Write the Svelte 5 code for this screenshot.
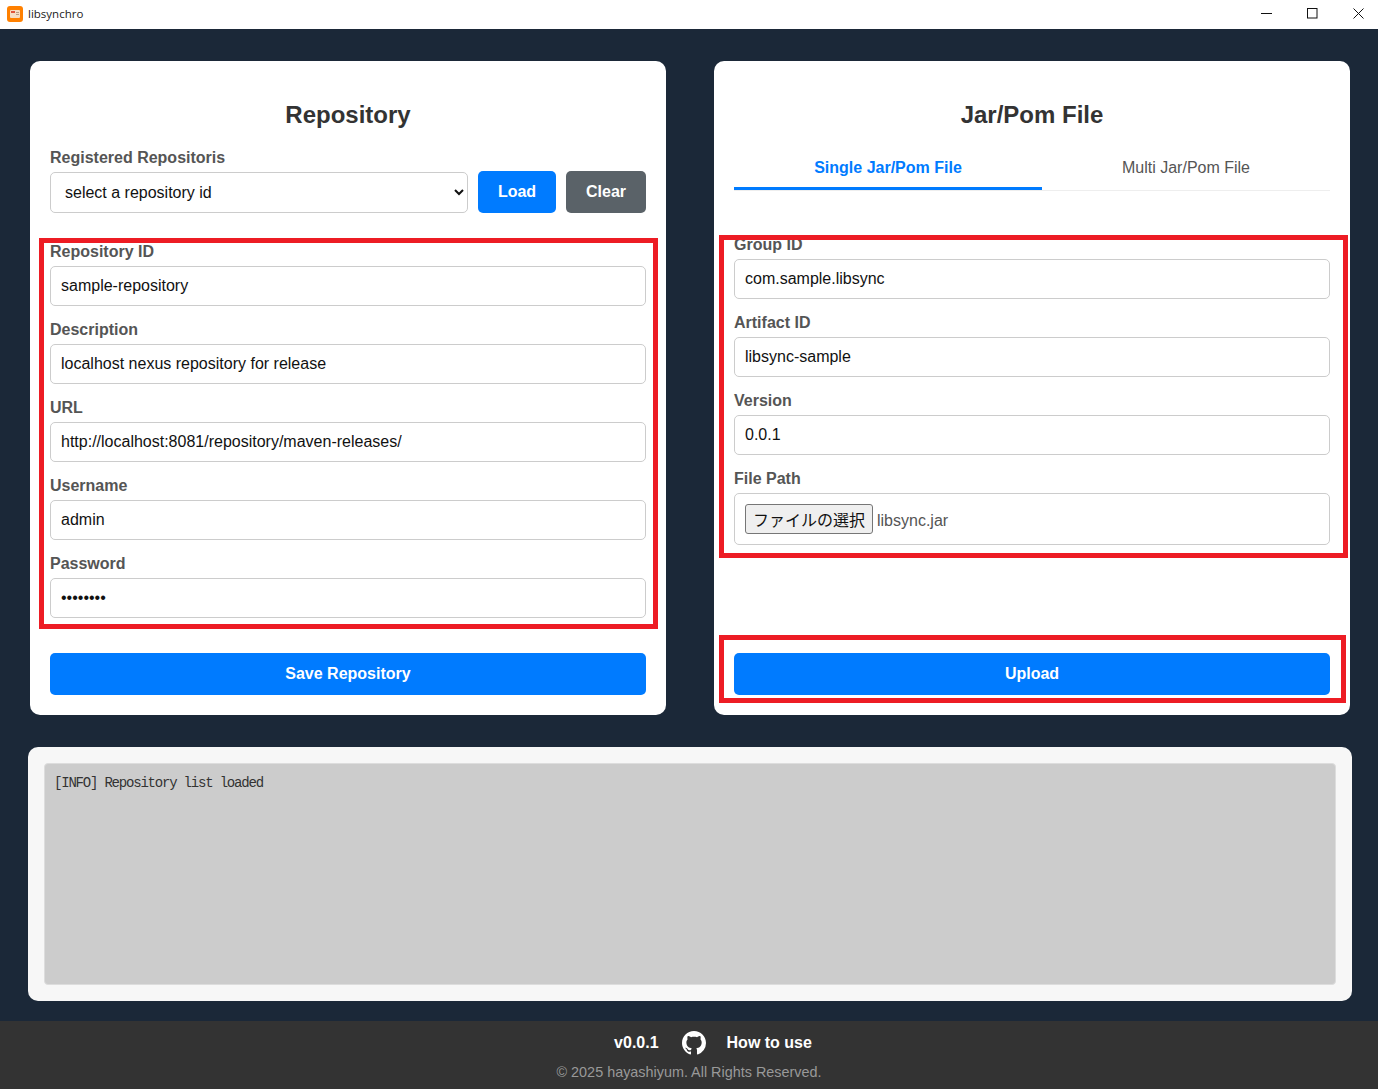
<script lang="ts">
  const repoFields = [
    { label: 'Repository ID', value: 'sample-repository', type: 'text' },
    { label: 'Description', value: 'localhost nexus repository for release', type: 'text' },
    { label: 'URL', value: 'http://localhost:8081/repository/maven-releases/', type: 'text' },
    { label: 'Username', value: 'admin', type: 'text' },
    { label: 'Password', value: 'password', type: 'password' },
  ];

  const jarFields = [
    { label: 'Group ID', value: 'com.sample.libsync' },
    { label: 'Artifact ID', value: 'libsync-sample' },
    { label: 'Version', value: '0.0.1' },
  ];
</script>

<div class="app">
  <header class="titlebar">
    <svg class="app-icon" viewBox="0 0 16 16" width="16" height="16" aria-hidden="true">
      <rect x="0" y="0" width="16" height="16" rx="3" fill="#ff8000" />
      <rect x="3" y="4" width="10" height="8" rx="1" fill="#f6dcc4" />
      <rect x="4" y="5" width="4" height="2" fill="#e0523a" />
      <rect x="9" y="6" width="3" height="1" fill="#b89a84" />
      <rect x="9" y="8" width="3" height="1" fill="#b89a84" />
    </svg>
    <span class="app-name">libsynchro</span>
    <div class="window-controls">
      <svg viewBox="0 0 11 11" width="11" height="11" aria-hidden="true"><path d="M0 5.5h11" stroke="#111" fill="none" /></svg>
      <svg viewBox="0 0 11 11" width="11" height="11" aria-hidden="true"><rect x="0.5" y="0.5" width="9.5" height="9.5" stroke="#111" fill="none" /></svg>
      <svg viewBox="0 0 11 11" width="11" height="11" aria-hidden="true"><path d="M0.5 0.5l10 10M10.5 0.5l-10 10" stroke="#111" fill="none" /></svg>
    </div>
  </header>

  <main class="content">
    <div class="panels">
      <section class="panel">
        <h2>Repository</h2>
        <label class="field-label" for="repo-select">Registered Repositoris</label>
        <div class="select-row">
          <select id="repo-select">
            <option>select a repository id</option>
          </select>
          <button class="btn primary">Load</button>
          <button class="btn secondary">Clear</button>
        </div>

        <div class="fields repo-fields">
          {#each repoFields as field}
            <div class="field">
              <span class="field-label">{field.label}</span>
              <input type={field.type} value={field.value} />
            </div>
          {/each}
        </div>

        <button class="btn primary wide">Save Repository</button>
        <div class="mark mark-repo"></div>
      </section>

      <section class="panel">
        <h2>Jar/Pom File</h2>
        <div class="tabs">
          <div class="tab active">Single Jar/Pom File</div>
          <div class="tab">Multi Jar/Pom File</div>
        </div>

        <div class="fields jar-fields">
          {#each jarFields as field}
            <div class="field">
              <span class="field-label">{field.label}</span>
              <input type="text" value={field.value} />
            </div>
          {/each}
          <div class="field">
            <span class="field-label">File Path</span>
            <div class="file-box">
              <button class="file-btn">ファイルの選択</button>
              <span class="file-name">libsync.jar</span>
            </div>
          </div>
        </div>

        <button class="btn primary wide">Upload</button>
        <div class="mark mark-jar"></div>
        <div class="mark mark-upload"></div>
      </section>
    </div>

    <section class="log-card">
      <div class="log">[INFO] Repository list loaded</div>
    </section>
  </main>

  <footer class="footer">
    <div class="footer-links">
      <span>v0.0.1</span>
      <svg viewBox="0 0 16 16" width="24" height="24" fill="#fff" aria-hidden="true">
        <path d="M8 0C3.58 0 0 3.58 0 8c0 3.54 2.29 6.53 5.47 7.59.4.07.55-.17.55-.38 0-.19-.01-.82-.01-1.49-2.01.37-2.53-.49-2.69-.94-.09-.23-.48-.94-.82-1.13-.28-.15-.68-.52-.01-.53.63-.01 1.08.58 1.23.82.72 1.21 1.87.87 2.33.66.07-.52.28-.87.51-1.07-1.78-.2-3.64-.89-3.64-3.95 0-.87.31-1.59.82-2.15-.08-.2-.36-1.02.08-2.12 0 0 .67-.21 2.2.82.64-.18 1.32-.27 2-.27.68 0 1.36.09 2 .27 1.53-1.04 2.2-.82 2.2-.82.44 1.1.16 1.92.08 2.12.51.56.82 1.27.82 2.15 0 3.07-1.87 3.75-3.65 3.95.29.25.54.73.54 1.48 0 1.07-.01 1.93-.01 2.2 0 .21.15.46.55.38A8.013 8.013 0 0016 8c0-4.42-3.58-8-8-8z" />
      </svg>
      <span class="how-to">How to use</span>
    </div>
    <p class="copyright">© 2025 hayashiyum. All Rights Reserved.</p>
  </footer>
</div>

<style>
  :global(body) {
    background: #1b2838;
    font-family: 'Liberation Sans', Arial, sans-serif;
    overflow: hidden;
  }

  .app {
    display: flex;
    flex-direction: column;
    height: 1089px;
  }

  .titlebar {
    display: flex;
    align-items: center;
    height: 29px;
    padding: 0 0 2px 7px;
    background: #fff;
    box-sizing: border-box;
  }

  .app-icon {
    margin-right: 5px;
  }

  .app-name {
    font-family: 'Open Sans', 'Noto Sans', sans-serif;
    font-size: 11.5px;
    color: #222;
  }

  .window-controls {
    display: flex;
    align-items: center;
    gap: 35px;
    margin-left: auto;
    margin-right: 14px;
  }

  .content {
    flex: 1;
    display: flex;
    flex-direction: column;
    gap: 32px;
    padding: 32px 26px 20px 28px;
  }

  .panels {
    display: grid;
    grid-template-columns: 636px 636px;
    gap: 48px;
    height: 654px;
    padding: 0 2px;
  }

  .panel {
    position: relative;
    display: flex;
    flex-direction: column;
    padding: 20px;
    background: #fff;
    border-radius: 10px;
    box-sizing: border-box;
  }

  h2 {
    margin: 20px 0 19px;
    font-size: 24px;
    line-height: 28px;
    font-weight: bold;
    text-align: center;
    color: #333;
  }

  .field-label {
    display: block;
    height: 19px;
    line-height: 20px;
    margin-bottom: 5px;
    font-size: 16px;
    font-weight: bold;
    color: #555;
  }

  .select-row {
    display: flex;
    align-items: flex-end;
    gap: 10px;
    height: 41px;
  }

  select {
    flex: 1;
    height: 41px;
    min-width: 0;
    padding: 0 10px;
    border: 1px solid #ccc;
    border-radius: 5px;
    background: #fff;
    font: 16px 'Liberation Sans', Arial, sans-serif;
    color: #111;
  }

  .btn {
    height: 42px;
    border: none;
    border-radius: 5px;
    color: #fff;
    font: bold 16px 'Liberation Sans', Arial, sans-serif;
  }

  .primary {
    background: #007bff;
  }

  .secondary {
    background: #5a6268;
  }

  .select-row .primary {
    width: 78px;
  }

  .select-row .secondary {
    width: 80px;
  }

  .wide {
    width: 100%;
    margin-top: auto;
    flex-shrink: 0;
  }

  .fields {
    display: flex;
    flex-direction: column;
    gap: 14px;
  }

  .repo-fields {
    margin-top: 29px;
  }

  .jar-fields {
    margin-top: 44px;
  }

  input {
    display: block;
    width: 100%;
    height: 40px;
    padding: 0 10px;
    border: 1px solid #ccc;
    border-radius: 5px;
    box-sizing: border-box;
    font: 16px 'Liberation Sans', Arial, sans-serif;
    color: #111;
    outline: none;
  }

  .tabs {
    display: flex;
    border-bottom: 1px solid #eee;
  }

  .tab {
    height: 42px;
    line-height: 40px;
    text-align: center;
    font-size: 16px;
    color: #555;
    box-sizing: border-box;
    flex: 0 0 288px;
  }

  .tab.active {
    flex: 0 0 308px;
    font-weight: bold;
    color: #007bff;
    border-bottom: 3px solid #007bff;
  }

  .file-box {
    display: flex;
    align-items: center;
    height: 52px;
    padding: 0 10px;
    border: 1px solid #ccc;
    border-radius: 5px;
    box-sizing: border-box;
  }

  .file-btn {
    height: 30px;
    width: 128px;
    padding: 0;
    margin-right: 4px;
    border: 1px solid #767676;
    border-radius: 3px;
    background: #efefef;
    font: 16px 'Liberation Sans', 'Noto Sans CJK JP', sans-serif;
    color: #111;
  }

  .file-name {
    margin-top: 3px;
    font-size: 16px;
    color: #555;
  }

  /* red annotation frames drawn over the screenshot */
  .mark {
    position: absolute;
    border: 5px solid #ed1c24;
    box-sizing: border-box;
    pointer-events: none;
  }

  .mark-repo {
    left: 9px;
    top: 177px;
    width: 619px;
    height: 391px;
  }

  .mark-jar {
    left: 5px;
    top: 174px;
    width: 629px;
    height: 323px;
  }

  .mark-upload {
    left: 5px;
    top: 574px;
    width: 627px;
    height: 68px;
  }

  .log-card {
    flex: 1;
    display: flex;
    padding: 16px;
    background: #f7f7f7;
    border-radius: 10px;
  }

  .log {
    flex: 1;
    padding: 11px 9px;
    background: #ccc;
    border: 1px solid #ddd;
    border-radius: 4px;
    font-family: 'Liberation Mono', monospace;
    font-size: 14px;
    letter-spacing: -1.2px;
    line-height: 17px;
    color: #333;
  }

  .footer {
    height: 68px;
    padding-top: 9px;
    box-sizing: border-box;
    background: #333;
    text-align: center;
  }

  .footer-links {
    display: flex;
    justify-content: center;
    align-items: center;
    gap: 23px;
    height: 26px;
    padding-left: 48px;
    color: #fff;
    font-size: 16px;
    font-weight: bold;
  }

  .how-to {
    margin-left: -2px;
  }

  .copyright {
    margin: 7px 0 0;
    font-size: 14.4px;
    line-height: 18px;
    color: #999;
  }
</style>
